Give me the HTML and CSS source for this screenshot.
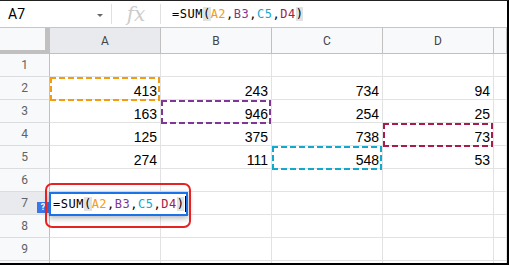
FILE: index.html
```html
<!DOCTYPE html>
<html lang="en">

<head>
    <meta charset="UTF-8">
    <title>SUM formula</title>
    <link rel="stylesheet" href="styles.css">
</head>

<body>

    <div class="frame">

        <div class="formula-bar">
            <div class="name-box">
                <span>A7</span>
                <span class="caret"></span>
            </div>
            <div class="sep"></div>
            <div class="fx">fx</div>
            <div class="sep"></div>
            <div class="formula">=SUM<span class="paren">(</span><span class="r1">A2</span>,<span class="r2">B3</span>,<span class="r3">C5</span>,<span class="r4">D4</span><span class="paren">)</span></div>
        </div>

        <div class="sheet">
            <!-- column headers -->
            <div class="corner"></div>
            <div class="ch active">A</div>
            <div class="ch">B</div>
            <div class="ch">C</div>
            <div class="ch">D</div>
            <div class="ch"></div>

            <div class="rh">1</div>
            <div class="c"></div><div class="c"></div><div class="c"></div><div class="c"></div><div class="c"></div>

            <div class="rh">2</div>
            <div class="c ref r1">413</div><div class="c">243</div><div class="c">734</div><div class="c">94</div><div class="c"></div>

            <div class="rh">3</div>
            <div class="c">163</div><div class="c ref r2">946</div><div class="c">254</div><div class="c">25</div><div class="c"></div>

            <div class="rh">4</div>
            <div class="c">125</div><div class="c">375</div><div class="c">738</div><div class="c ref r4">73</div><div class="c"></div>

            <div class="rh">5</div>
            <div class="c">274</div><div class="c">111</div><div class="c ref r3">548</div><div class="c">53</div><div class="c"></div>

            <div class="rh">6</div>
            <div class="c"></div><div class="c"></div><div class="c"></div><div class="c"></div><div class="c"></div>

            <div class="rh active">7</div>
            <div class="c editing">
                <div class="help-tag">?</div>
                <div class="editor">=SUM<span class="paren">(</span><span class="r1">A2</span>,<span class="r2">B3</span>,<span class="r3">C5</span>,<span class="r4">D4</span><span class="paren">)</span><span class="cursor"></span></div>
                <div class="ring"></div>
            </div>
            <div class="c"></div><div class="c"></div><div class="c"></div><div class="c"></div>

            <div class="rh">8</div>
            <div class="c"></div><div class="c"></div><div class="c"></div><div class="c"></div><div class="c"></div>

            <div class="rh">9</div>
            <div class="c"></div><div class="c"></div><div class="c"></div><div class="c"></div><div class="c"></div>

            <!-- row 10, cut off by the frame -->
            <div class="rh"></div>
            <div class="c"></div><div class="c"></div><div class="c"></div><div class="c"></div><div class="c"></div>
        </div>

    </div>

</body>

</html>
```

FILE: styles.css
```css
body {
    margin: 0;
    padding: 0;
    background: #fff;
    font-family: Roboto, Arial, sans-serif;
}

.frame {
    position: relative;
    width: 509px;
    height: 265px;
    box-sizing: border-box;
    border-top: 1px solid #222;
    border-right: 2px solid #000;
    border-bottom: 2px solid #000;
    overflow: hidden;
    background: #fff;
}

/* formula bar */

.formula-bar {
    display: flex;
    align-items: center;
    height: 26px;
    border-bottom: 1px solid #c4c7c5;
}

.name-box {
    display: flex;
    align-items: center;
    width: 111px;
    box-sizing: border-box;
    padding-left: 8px;
    font-size: 14px;
    color: #000;
}

.caret {
    margin-left: auto;
    margin-right: 8px;
    margin-top: 2px;
    border-left: 3px solid transparent;
    border-right: 3px solid transparent;
    border-top: 3px solid #666;
}

.sep {
    width: 1px;
    height: 20px;
    background: #e0e0e0;
}

.fx {
    width: 48px;
    text-align: center;
    font-family: "DejaVu Serif", "Liberation Serif", serif;
    font-style: italic;
    font-size: 20px;
    color: #cccccc;
    line-height: 26px;
}

.formula,
.editor {
    font-family: "DejaVu Sans Mono", monospace;
    font-size: 12px;
    letter-spacing: 0.5px;
    color: #000;
    white-space: nowrap;
}

.formula {
    padding-left: 11px;
    line-height: 16px;
}

.paren {
    background: #e2e2e2;
}

.r1 { color: #f39c12; --c: #f39c12; }
.r2 { color: #7e3794; --c: #7e3794; }
.r3 { color: #11a9cc; --c: #11a9cc; }
.r4 { color: #a61d4c; --c: #a61d4c; }

/* grid */

.sheet {
    display: grid;
    grid-template-columns: 50px 111px 111px 111px 111px 13px;
    grid-template-rows: 26px repeat(10, 23px);
}

.corner {
    background: #f8f9fa;
    border-right: 5px solid #c0c0c0;
    border-bottom: 4px solid #c0c0c0;
}

.ch {
    display: flex;
    align-items: center;
    justify-content: center;
    background: #f8f9fa;
    border-right: 1px solid #c0c0c0;
    border-bottom: 1px solid #c0c0c0;
    font-size: 12px;
    color: #444;
}

.rh {
    display: flex;
    align-items: center;
    justify-content: center;
    background: #f8f9fa;
    border-right: 1px solid #c0c0c0;
    border-bottom: 1px solid #dadce0;
    font-size: 12px;
    color: #5f6368;
}

.ch.active,
.rh.active {
    background: #e8eaed;
}

.c {
    position: relative;
    display: flex;
    align-items: flex-end;
    justify-content: flex-end;
    padding-right: 3px;
    border-right: 1px solid #e2e2e3;
    border-bottom: 1px solid #e2e2e3;
    font-family: "Liberation Sans", Arial, sans-serif;
    font-size: 14px;
    line-height: 16px;
    color: #000;
}

/* dashed range boxes */

.c.ref::after {
    content: "";
    position: absolute;
    top: 0;
    left: 0;
    width: 110px;
    height: 24px;
    background:
        repeating-linear-gradient(90deg, var(--c) 0 6px, transparent 6px 9px) top left / 100% 2px no-repeat,
        repeating-linear-gradient(90deg, var(--c) 0 6px, transparent 6px 9px) bottom left / 100% 2px no-repeat,
        repeating-linear-gradient(180deg, var(--c) 0 6px, transparent 6px 9px) top left / 2px 100% no-repeat,
        repeating-linear-gradient(180deg, var(--c) 0 6px, transparent 6px 9px) top right / 2px 100% no-repeat;
}

/* cell being edited */

.editor {
    position: absolute;
    top: 0;
    left: -1px;
    width: 139px;
    height: 24px;
    box-sizing: border-box;
    border: 2px solid #1a73e8;
    background: #fff;
    padding-left: 2px;
    line-height: 20px;
    box-shadow: 0 2px 6px rgba(0, 0, 0, 0.3);
    z-index: 2;
}

.cursor {
    display: inline-block;
    width: 1px;
    height: 16px;
    margin-left: 1px;
    vertical-align: -4px;
    background: #000;
}

.help-tag {
    position: absolute;
    top: 10px;
    left: -13px;
    width: 12px;
    height: 11px;
    background: #3b78e7;
    color: #fff;
    font-family: Roboto, sans-serif;
    font-size: 9px;
    font-weight: bold;
    line-height: 11px;
    text-align: center;
    z-index: 2;
}

.ring {
    position: absolute;
    top: -9px;
    left: -5px;
    width: 146px;
    height: 45px;
    box-sizing: border-box;
    border: 2px solid #e62222;
    border-radius: 7px;
    z-index: 3;
}
```
